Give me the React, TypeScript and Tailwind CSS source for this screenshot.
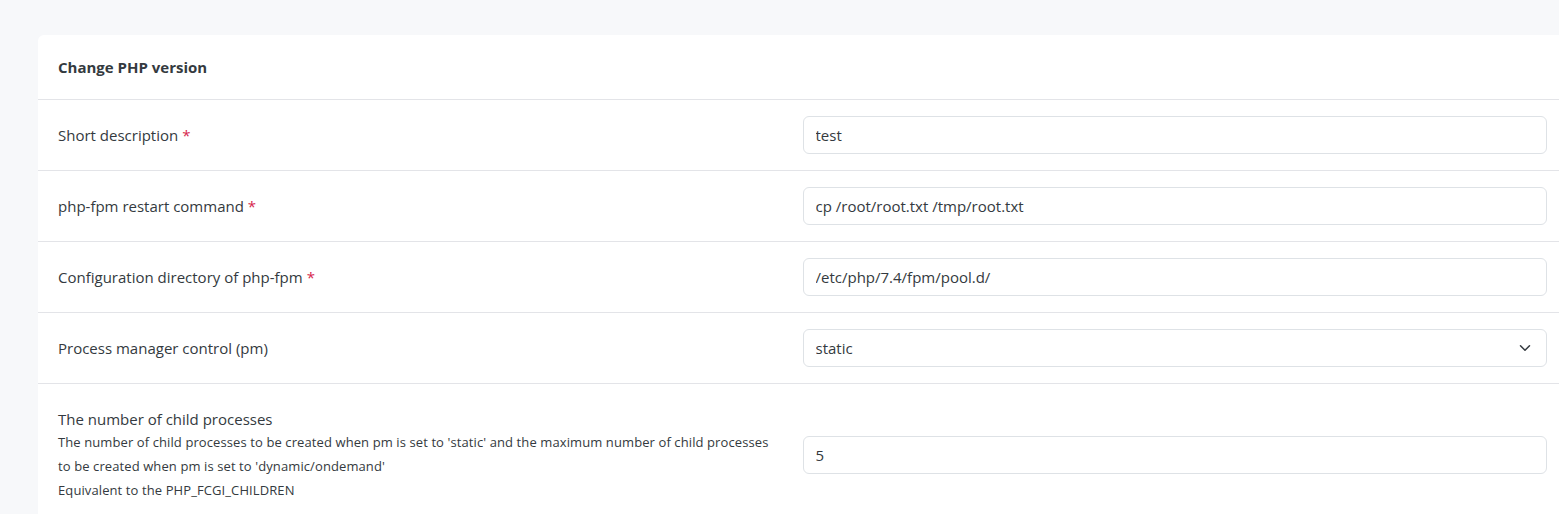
import React from 'react';

const rows = [
    { label: 'Short description', required: true, value: 'test' },
    { label: 'php-fpm restart command', required: true, value: 'cp /root/root.txt /tmp/root.txt' },
    { label: 'Configuration directory of php-fpm', required: true, value: '/etc/php/7.4/fpm/pool.d/' },
];

const inputCls = "w-full h-[38px] rounded-md border border-[#dee2e6] bg-white px-3 text-[15px] text-[#343a40] outline-none";

export default function App() {
    return (
        <div className="min-h-[514px] bg-[#f7f8fa] pt-[35px] pl-[38px] overflow-hidden" style={{ fontFamily: '"Open Sans", "Noto Sans", sans-serif' }}>
            <div className="w-[1529px] bg-white rounded-tl-md text-[#343a40]">
                <div className="h-[65px] px-5 flex items-center border-b border-[#e3e4e8]">
                    <h2 className="text-[15px] font-bold">Change PHP version</h2>
                </div>

                {rows.map((row) => (
                    <div key={row.label} className="grid grid-cols-2 items-center px-5 py-4 border-b border-[#e3e4e8]">
                        <label className="text-[15px]">
                            {row.label}
                            {row.required && <span className="text-[#d6264d] ml-1">*</span>}
                        </label>
                        <input className={inputCls} defaultValue={row.value} />
                    </div>
                ))}

                <div className="grid grid-cols-2 items-center px-5 py-4 border-b border-[#e3e4e8]">
                    <label className="text-[15px]">Process manager control (pm)</label>
                    <div className="relative">
                        <select className={inputCls + " appearance-none"} defaultValue="static">
                            <option value="static">static</option>
                            <option value="dynamic">dynamic</option>
                            <option value="ondemand">ondemand</option>
                        </select>
                        <svg className="absolute right-[16px] top-1/2 -translate-y-1/2 w-3 h-3 text-[#343a40]" viewBox="0 0 16 16" fill="none" stroke="currentColor" strokeWidth="2" strokeLinecap="round" strokeLinejoin="round">
                            <path d="M2 5l6 6 6-6" />
                        </svg>
                    </div>
                </div>

                <div className="grid grid-cols-2 items-center px-5 pt-6 pb-4">
                    <div>
                        <div className="text-[15px] leading-[22px]">The number of child processes</div>
                        <div className="text-[13px] leading-[24px] tracking-[0.1px]">
                            The number of child processes to be created when pm is set to 'static' and the maximum number of child processes
                            <br />
                            to be created when pm is set to 'dynamic/ondemand'
                            <br />
                            Equivalent to the PHP_FCGI_CHILDREN
                        </div>
                    </div>
                    <input className={inputCls} defaultValue="5" />
                </div>
            </div>
        </div>
    );
}
